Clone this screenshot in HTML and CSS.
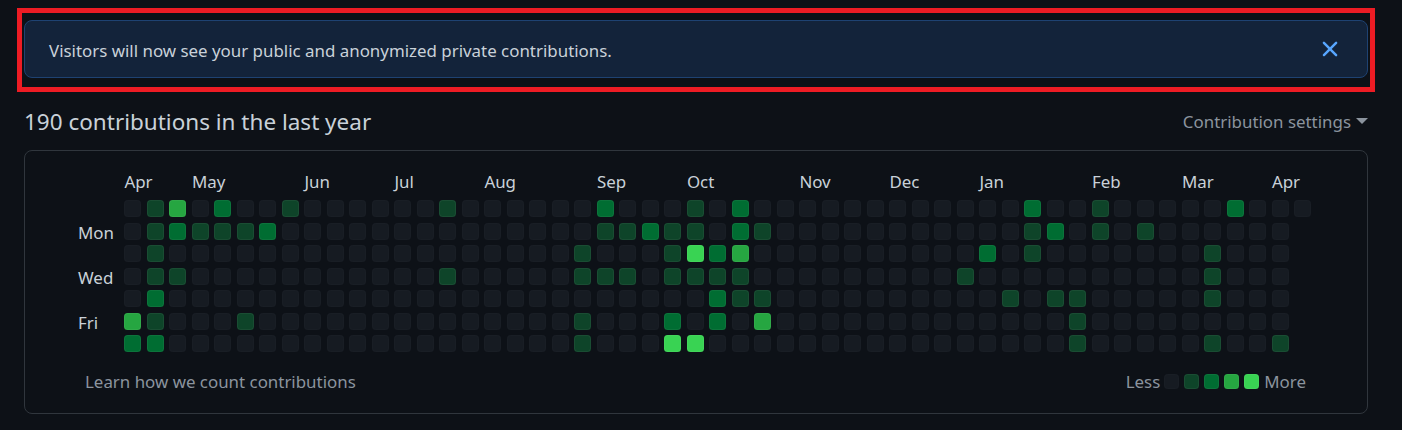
FILE: index.html
```html
<!DOCTYPE html>
<html lang="en">
<head>
<meta charset="utf-8">
<title>Contributions</title>
<link rel="stylesheet" href="styles.css">
</head>
<body>
<main class="page">
  <div class="highlight">
    <div class="flash">
      <span class="flash-text">Visitors will now see your public and anonymized private contributions.</span>
      <svg class="close" viewBox="0 0 16 16" aria-hidden="true"><path d="M3.72 3.72a.75.75 0 0 1 1.06 0L8 6.94l3.22-3.22a.75.75 0 1 1 1.06 1.06L9.06 8l3.22 3.22a.75.75 0 1 1-1.06 1.06L8 9.06l-3.22 3.22a.75.75 0 0 1-1.06-1.06L6.94 8 3.72 4.78a.75.75 0 0 1 0-1.06Z"/></svg>
    </div>
  </div>
  <header class="heading">
    <h2>190 contributions in the last year</h2>
    <div class="settings">Contribution settings <span class="caret"></span></div>
  </header>
  <section class="calendar">
    <div class="months">
      <span class="s3">Apr</span><span class="s5">May</span><span class="s4">Jun</span><span class="s4">Jul</span><span class="s5">Aug</span><span class="s4">Sep</span><span class="s5">Oct</span><span class="s4">Nov</span><span class="s4">Dec</span><span class="s5">Jan</span><span class="s4">Feb</span><span class="s4">Mar</span><span class="s2">Apr</span>
    </div>
    <div class="body">
      <div class="days"><span></span><span>Mon</span><span></span><span>Wed</span><span></span><span>Fri</span><span></span></div>
      <div class="weeks">
        <div class="week"><i></i><i></i><i></i><i></i><i></i><i class="l3"></i><i class="l2"></i></div>
        <div class="week"><i class="l1"></i><i class="l1"></i><i class="l1"></i><i class="l1"></i><i class="l2"></i><i class="l1"></i><i class="l2"></i></div>
        <div class="week"><i class="l3"></i><i class="l2"></i><i></i><i class="l1"></i><i></i><i></i><i></i></div>
        <div class="week"><i></i><i class="l1"></i><i></i><i></i><i></i><i></i><i></i></div>
        <div class="week"><i class="l2"></i><i class="l1"></i><i></i><i></i><i></i><i></i><i></i></div>
        <div class="week"><i></i><i class="l1"></i><i></i><i></i><i></i><i class="l1"></i><i></i></div>
        <div class="week"><i></i><i class="l2"></i><i></i><i></i><i></i><i></i><i></i></div>
        <div class="week"><i class="l1"></i><i></i><i></i><i></i><i></i><i></i><i></i></div>
        <div class="week"><i></i><i></i><i></i><i></i><i></i><i></i><i></i></div>
        <div class="week"><i></i><i></i><i></i><i></i><i></i><i></i><i></i></div>
        <div class="week"><i></i><i></i><i></i><i></i><i></i><i></i><i></i></div>
        <div class="week"><i></i><i></i><i></i><i></i><i></i><i></i><i></i></div>
        <div class="week"><i></i><i></i><i></i><i></i><i></i><i></i><i></i></div>
        <div class="week"><i></i><i></i><i></i><i></i><i></i><i></i><i></i></div>
        <div class="week"><i class="l1"></i><i></i><i></i><i class="l1"></i><i></i><i></i><i></i></div>
        <div class="week"><i></i><i></i><i></i><i></i><i></i><i></i><i></i></div>
        <div class="week"><i></i><i></i><i></i><i></i><i></i><i></i><i></i></div>
        <div class="week"><i></i><i></i><i></i><i></i><i></i><i></i><i></i></div>
        <div class="week"><i></i><i></i><i></i><i></i><i></i><i></i><i></i></div>
        <div class="week"><i></i><i></i><i></i><i></i><i></i><i></i><i></i></div>
        <div class="week"><i></i><i></i><i class="l1"></i><i class="l1"></i><i></i><i class="l1"></i><i class="l1"></i></div>
        <div class="week"><i class="l2"></i><i class="l1"></i><i></i><i class="l1"></i><i></i><i></i><i></i></div>
        <div class="week"><i></i><i class="l1"></i><i></i><i class="l1"></i><i></i><i></i><i></i></div>
        <div class="week"><i></i><i class="l2"></i><i></i><i></i><i></i><i></i><i></i></div>
        <div class="week"><i></i><i class="l1"></i><i class="l1"></i><i class="l1"></i><i></i><i class="l2"></i><i class="l4"></i></div>
        <div class="week"><i class="l1"></i><i class="l1"></i><i class="l4"></i><i class="l1"></i><i></i><i></i><i class="l4"></i></div>
        <div class="week"><i></i><i></i><i class="l2"></i><i class="l1"></i><i class="l2"></i><i class="l2"></i><i></i></div>
        <div class="week"><i class="l2"></i><i class="l2"></i><i class="l3"></i><i class="l1"></i><i class="l1"></i><i></i><i></i></div>
        <div class="week"><i></i><i class="l1"></i><i></i><i></i><i class="l1"></i><i class="l3"></i><i></i></div>
        <div class="week"><i></i><i></i><i></i><i></i><i></i><i></i><i></i></div>
        <div class="week"><i></i><i></i><i></i><i></i><i></i><i></i><i></i></div>
        <div class="week"><i></i><i></i><i></i><i></i><i></i><i></i><i></i></div>
        <div class="week"><i></i><i></i><i></i><i></i><i></i><i></i><i></i></div>
        <div class="week"><i></i><i></i><i></i><i></i><i></i><i></i><i></i></div>
        <div class="week"><i></i><i></i><i></i><i></i><i></i><i></i><i></i></div>
        <div class="week"><i></i><i></i><i></i><i></i><i></i><i></i><i></i></div>
        <div class="week"><i></i><i></i><i></i><i></i><i></i><i></i><i></i></div>
        <div class="week"><i></i><i></i><i></i><i class="l1"></i><i></i><i></i><i></i></div>
        <div class="week"><i></i><i></i><i class="l2"></i><i></i><i></i><i></i><i></i></div>
        <div class="week"><i></i><i></i><i></i><i></i><i class="l1"></i><i></i><i></i></div>
        <div class="week"><i class="l2"></i><i class="l1"></i><i class="l1"></i><i></i><i></i><i></i><i></i></div>
        <div class="week"><i></i><i class="l2"></i><i></i><i></i><i class="l1"></i><i></i><i></i></div>
        <div class="week"><i></i><i></i><i></i><i></i><i class="l1"></i><i class="l1"></i><i class="l1"></i></div>
        <div class="week"><i class="l1"></i><i class="l1"></i><i></i><i></i><i></i><i></i><i></i></div>
        <div class="week"><i></i><i></i><i></i><i></i><i></i><i></i><i></i></div>
        <div class="week"><i></i><i class="l1"></i><i></i><i></i><i></i><i></i><i></i></div>
        <div class="week"><i></i><i></i><i></i><i></i><i></i><i></i><i></i></div>
        <div class="week"><i></i><i></i><i></i><i></i><i></i><i></i><i></i></div>
        <div class="week"><i></i><i></i><i class="l1"></i><i class="l1"></i><i class="l1"></i><i></i><i class="l1"></i></div>
        <div class="week"><i class="l2"></i><i></i><i></i><i></i><i></i><i></i><i></i></div>
        <div class="week"><i></i><i></i><i></i><i></i><i></i><i></i><i></i></div>
        <div class="week"><i></i><i></i><i></i><i></i><i></i><i></i><i class="l1"></i></div>
        <div class="week"><i></i></div>
      </div>
    </div>
    <footer class="foot">
      <span>Learn how we count contributions</span>
      <div class="legend"><span class="less">Less</span><b></b><b class="l1"></b><b class="l2"></b><b class="l3"></b><b class="l4"></b><span>More</span></div>
    </footer>
  </section>
</main>
</body>
</html>
```
FILE: styles.css
```css
* { box-sizing: border-box; }
html, body { margin: 0; height: 100%; }
body {
  background: #0d1117;
  color: #c9d1d9;
  font-family: "Noto Sans", "Open Sans", "Liberation Sans", sans-serif;
  overflow: hidden;
}
.page { padding: 8px 34px 0 24px; }
.highlight {
  margin: 0 -7px;
  padding: 7px 2px;
  height: 84px;
  border: 5px solid #ed1c24;
}
.flash {
  display: flex;
  align-items: center;
  justify-content: space-between;
  height: 58px;
  padding: 0 24px 0 24px;
  background: #13233a;
  border: 1px solid #1e4272;
  border-radius: 8px;
  font-size: 16.9px;
}
.flash-text { padding-top: 2px; }
.close { width: 26px; height: 26px; fill: #58a6ff; }
.heading {
  display: flex;
  align-items: center;
  justify-content: space-between;
  height: 58px;
}
.heading h2 { margin: 0; font-size: 22.5px; font-weight: 400; }
.settings { display: flex; align-items: center; gap: 5px; color: #8b949e; font-size: 16.9px; }
.caret {
  width: 0;
  height: 0;
  border: 6px solid transparent;
  border-top-color: #8b949e;
  border-bottom: 0;
}
.calendar {
  height: 264px;
  padding: 20px 61px 0 53px;
  border: 1px solid #30363d;
  border-radius: 8px;
  font-size: 16.9px;
}
.months {
  display: grid;
  grid-template-columns: repeat(53, 22.5px);
  height: 29px;
  margin-left: 46.4px;
  line-height: 22px;
}
.s2 { grid-column: span 2; }
.s3 { grid-column: span 3; }
.s4 { grid-column: span 4; }
.s5 { grid-column: span 5; }
.body { display: flex; }
.days {
  flex: none;
  display: grid;
  grid-template-rows: repeat(7, 22.5px);
  width: 46.4px;
  line-height: 20px;
}
.weeks {
  flex: none;
  display: grid;
  grid-template-columns: repeat(53, 17px);
  column-gap: 5.5px;
}
.week {
  display: grid;
  grid-auto-rows: 17px;
  row-gap: 5.5px;
}
.week i, .legend b {
  display: block;
  background: #161b22;
  outline: 1px solid rgba(255, 255, 255, 0.015);
  outline-offset: -1px;
  border-radius: 3.5px;
}
.week i.l1, .legend b.l1 { background: #0e4429; outline-color: rgba(255, 255, 255, 0.05); }
.week i.l2, .legend b.l2 { background: #006d32; outline-color: rgba(255, 255, 255, 0.05); }
.week i.l3, .legend b.l3 { background: #26a641; outline-color: rgba(255, 255, 255, 0.05); }
.week i.l4, .legend b.l4 { background: #39d353; outline-color: rgba(255, 255, 255, 0.05); }
.foot {
  display: flex;
  align-items: center;
  justify-content: space-between;
  margin-top: 7.5px;
  padding-left: 7px;
  height: 32px;
  color: #8b949e;
}
.legend { display: flex; align-items: center; gap: 5px; }
.legend b { width: 15px; height: 15px; }
.less { margin-right: -1px; }
```
